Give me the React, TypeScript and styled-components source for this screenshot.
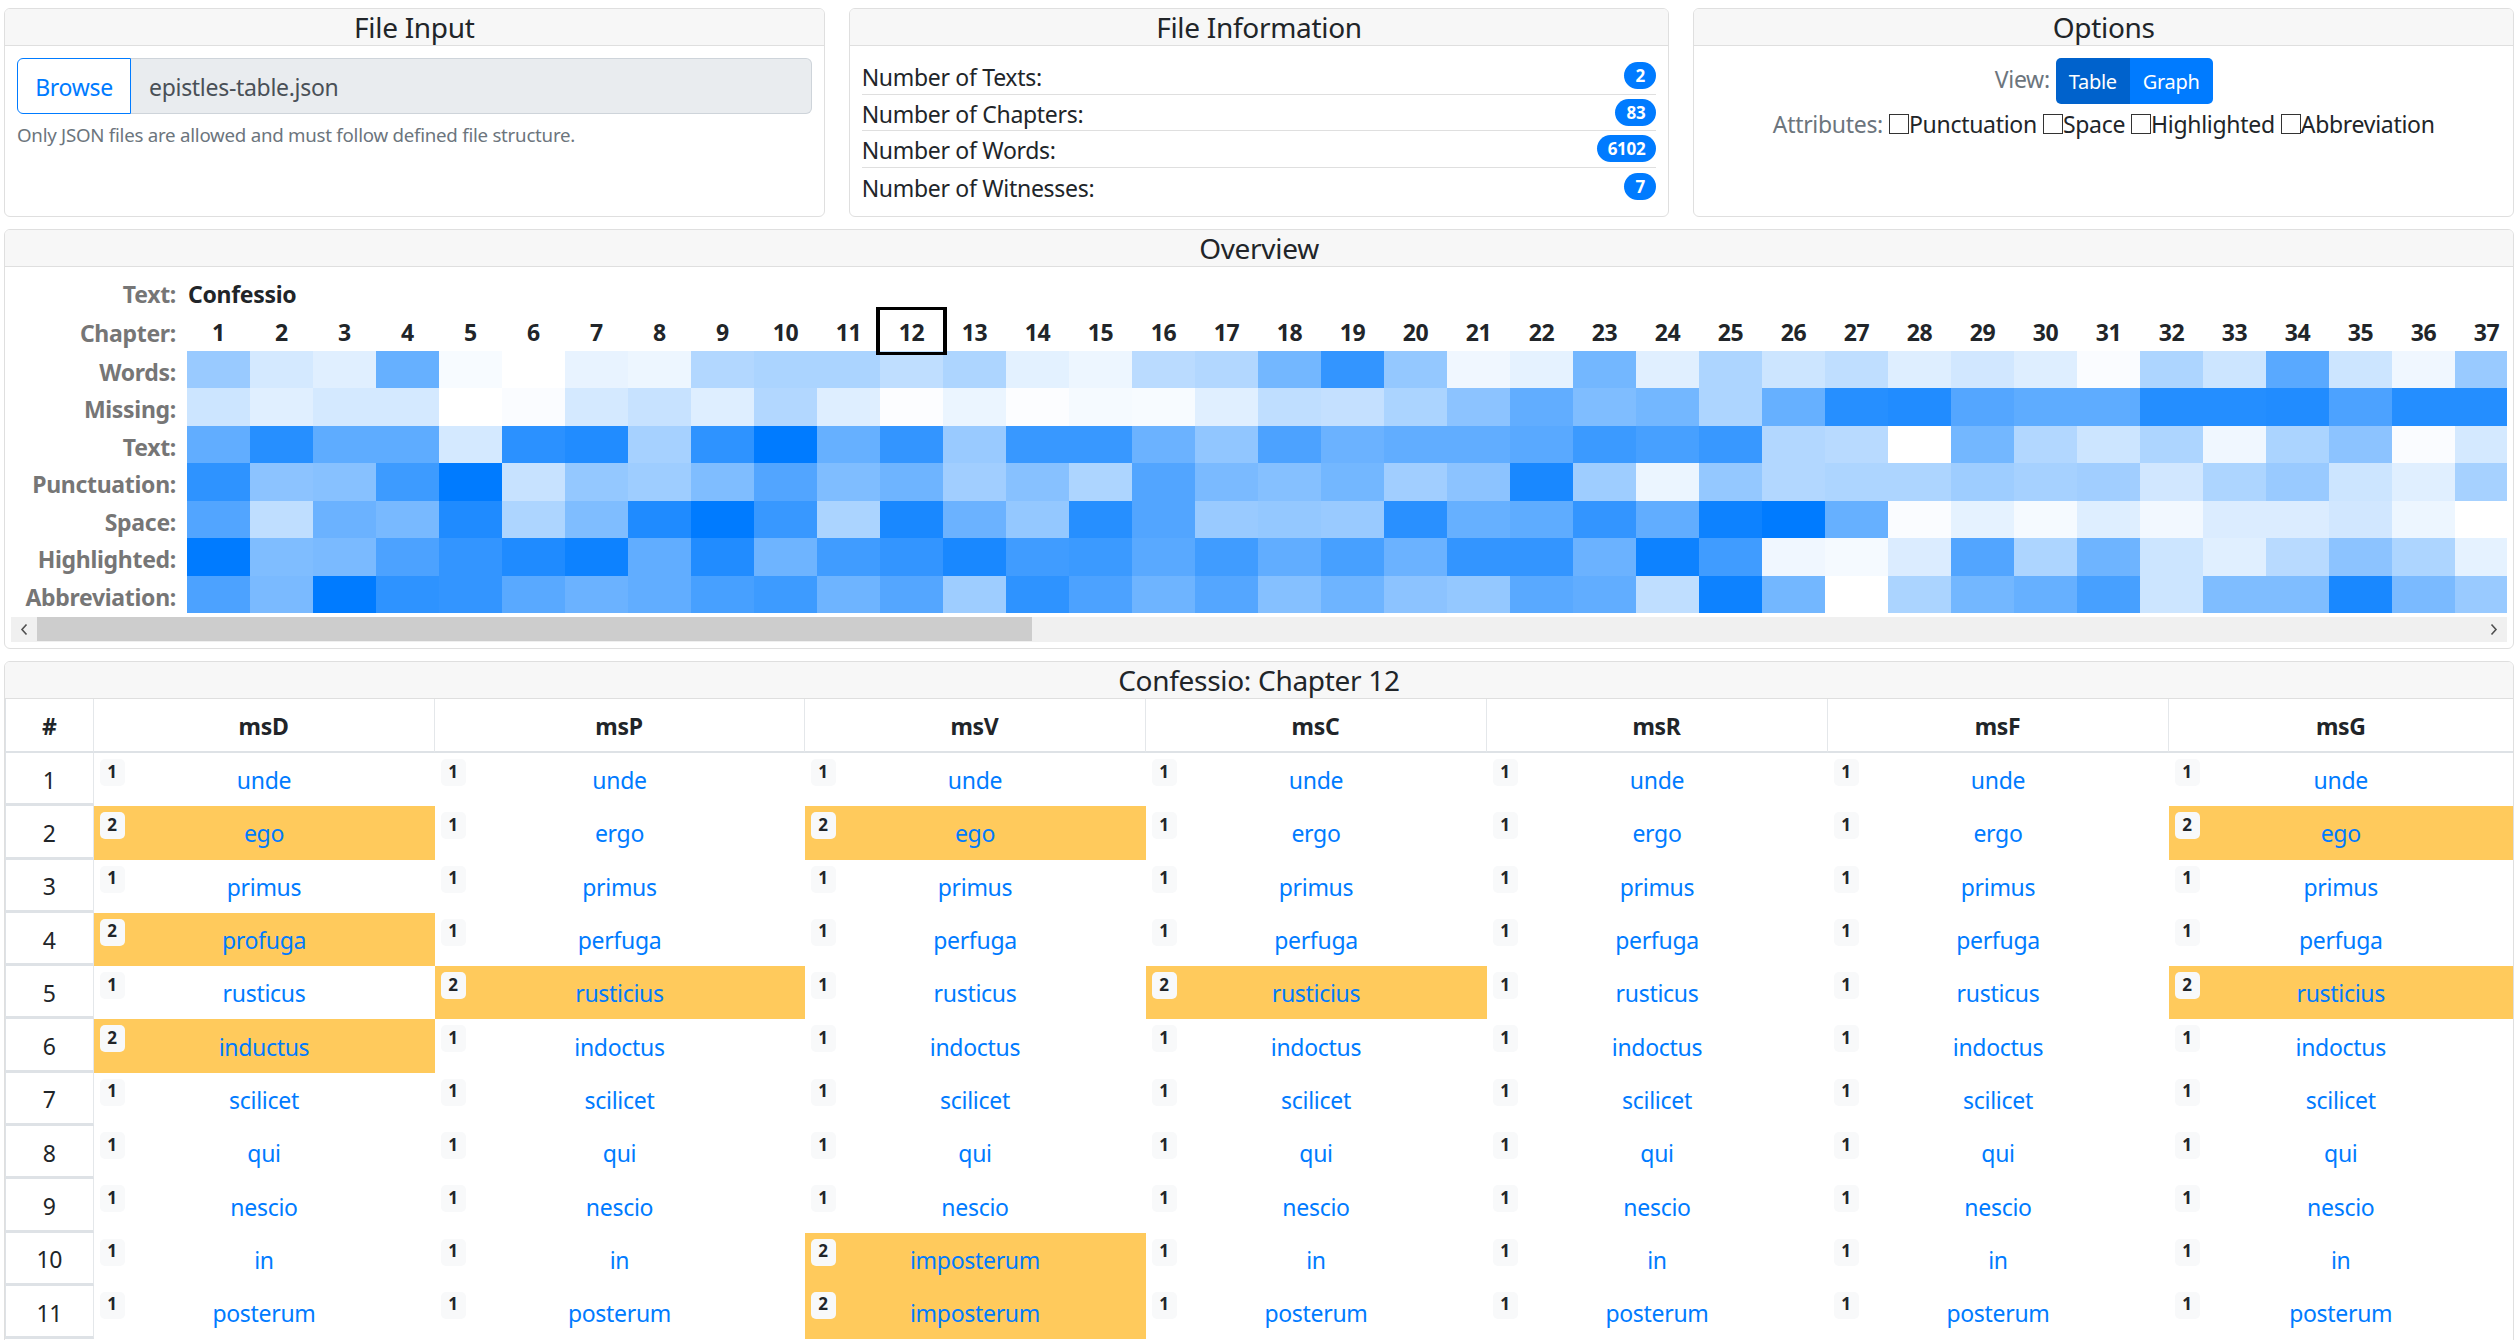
import { createGlobalStyle, styled } from "styled-components";

const FONT = `"Noto Sans", "Open Sans", "Liberation Sans", sans-serif`;

const GlobalStyle = createGlobalStyle`
  html, body {
    margin: 0;
    height: 1340px;
    overflow: hidden;
    background: #fff;
    color: #212529;
    font-family: ${FONT};
    font-size: 23px;
    letter-spacing: -0.3px;
  }
  * { box-sizing: border-box; }
`;

const HEAT: [string, number[]][] = [
  ["Words:", [.4,.17,.12,.6,.03,0,.09,.07,.3,.33,.33,.25,.32,.11,.07,.27,.3,.55,.8,.42,.06,.1,.55,.12,.32,.2,.25,.13,.18,.13,.02,.32,.2,.65,.2,.06,.4]],
  ["Missing:", [.2,.12,.17,.17,0,.02,.17,.22,.13,.3,.13,.01,.08,.01,.04,.03,.12,.25,.23,.33,.45,.62,.5,.55,.32,.6,.85,.87,.67,.63,.63,.86,.86,.87,.7,.86,.86]],
  ["Text:", [.62,.85,.63,.63,.17,.83,.87,.35,.82,1,.6,.8,.4,.78,.78,.58,.43,.7,.58,.62,.62,.65,.77,.72,.78,.3,.28,0,.55,.3,.2,.32,.06,.33,.45,.02,.17]],
  ["Punctuation:", [.82,.45,.47,.76,1,.22,.42,.38,.5,.68,.5,.57,.37,.47,.32,.68,.52,.48,.55,.37,.45,.9,.38,.08,.42,.3,.32,.32,.38,.35,.37,.18,.32,.4,.2,.12,.35]],
  ["Space:", [.68,.25,.58,.53,.88,.32,.5,.88,1,.78,.33,.9,.58,.42,.85,.68,.4,.42,.4,.84,.6,.63,.8,.62,.95,1,.6,.02,.1,.04,.13,.05,.14,.14,.18,.07,0]],
  ["Highlighted:", [1,.5,.52,.7,.8,.88,.95,.62,.87,.57,.75,.8,.9,.75,.77,.65,.75,.62,.72,.58,.8,.8,.58,.95,.75,.06,.04,.14,.68,.32,.57,.2,.12,.28,.45,.32,.1]],
  ["Abbreviation:", [.7,.52,1,.82,.8,.65,.58,.62,.72,.76,.57,.67,.38,.82,.7,.57,.67,.48,.57,.45,.42,.65,.62,.25,.95,.55,0,.33,.55,.6,.72,.2,.5,.5,.9,.52,.4]],
];

const CHAPTERS = Array.from({ length: 37 }, (_, i) => i + 1);
const WITNESSES = ["msD", "msP", "msV", "msC", "msR", "msF", "msG"];
const COL_WIDTHS = [88.5, 341, 370, 341, 341, 341, 341];

const ROWS: string[][] = [
  ["unde", "unde", "unde", "unde", "unde", "unde", "unde"],
  ["*ego", "ergo", "*ego", "ergo", "ergo", "ergo", "*ego"],
  ["primus", "primus", "primus", "primus", "primus", "primus", "primus"],
  ["*profuga", "perfuga", "perfuga", "perfuga", "perfuga", "perfuga", "perfuga"],
  ["rusticus", "*rusticius", "rusticus", "*rusticius", "rusticus", "rusticus", "*rusticius"],
  ["*inductus", "indoctus", "indoctus", "indoctus", "indoctus", "indoctus", "indoctus"],
  ["scilicet", "scilicet", "scilicet", "scilicet", "scilicet", "scilicet", "scilicet"],
  ["qui", "qui", "qui", "qui", "qui", "qui", "qui"],
  ["nescio", "nescio", "nescio", "nescio", "nescio", "nescio", "nescio"],
  ["in", "in", "*imposterum", "in", "in", "in", "in"],
  ["posterum", "posterum", "*imposterum", "posterum", "posterum", "posterum", "posterum"],
];

const INFO = [
  ["Number of Texts:", "2"],
  ["Number of Chapters:", "83"],
  ["Number of Words:", "6102"],
  ["Number of Witnesses:", "7"],
];

const Page = styled.div`
  height: 1340px;
  overflow: hidden;
  padding: 8px 5px 0 4px;
  display: flex;
  flex-direction: column;
  gap: 12px;
`;

const TopRow = styled.div`
  display: grid;
  grid-template-columns: repeat(3, 1fr);
  gap: 24px;
`;

const Card = styled.section<{ $height?: number }>`
  border: 1px solid #dfdfdf;
  border-radius: 6px;
  overflow: hidden;
  flex-shrink: 0;
  ${(p) => (p.$height ? `height: ${p.$height}px;` : "")}
`;

const CardHeader = styled.header`
  height: 37px;
  line-height: 36px;
  background: #f7f7f7;
  border-bottom: 1px solid #dfdfdf;
  text-align: center;
  font-size: 28px;
`;

const InputBody = styled.div`
  padding: 12px 12px 0;
`;

const InputGroup = styled.div`
  display: flex;
  height: 56px;
`;

const BrowseButton = styled.button`
  width: 114px;
  padding: 2px 0 0;
  border: 1px solid #007bff;
  border-radius: 6px 0 0 6px;
  background: #fff;
  color: #007bff;
  font: inherit;
  letter-spacing: inherit;
`;

const FileName = styled.div`
  flex: 1;
  display: flex;
  align-items: center;
  padding: 2px 0 0 18px;
  background: #e9ecef;
  border: 1px solid #ced4da;
  border-left: none;
  border-radius: 0 6px 6px 0;
  color: #495057;
`;

const HelpText = styled.p`
  margin: 8px 0 0;
  font-size: 18.7px;
  letter-spacing: -0.25px;
  color: #6c757d;
`;

const InfoList = styled.ul`
  list-style: none;
  margin: 0;
  padding: 12px 12px 0;
`;

const InfoRow = styled.li`
  height: 36.6px;
  display: flex;
  justify-content: space-between;
  align-items: center;
  border-bottom: 1px solid #dfdfdf;
  &:last-child {
    border-bottom: none;
  }
`;

const InfoLabel = styled.span`
  padding-top: 3px;
`;

const CountBadge = styled.span`
  min-width: 32px;
  height: 27px;
  padding: 0 11px;
  display: inline-flex;
  align-items: center;
  justify-content: center;
  border-radius: 14px;
  background: #007bff;
  color: #fff;
  font-size: 17px;
  font-weight: 700;
`;

const OptionsBody = styled.div`
  padding-top: 12px;
  display: flex;
  flex-direction: column;
  align-items: center;
`;

const OptionLine = styled.div`
  display: flex;
  align-items: center;
  gap: 6px;
  height: 40px;
`;

const ViewLine = styled(OptionLine)`
  align-items: flex-start;
  height: 46px;
`;

const OptionLabel = styled.span`
  color: #6c757d;
`;

const ViewLabel = styled(OptionLabel)`
  line-height: 42px;
`;

const ButtonGroup = styled.div`
  display: flex;
  height: 46px;
  border-radius: 5px;
  overflow: hidden;
`;

const ViewButton = styled.button<{ $active?: boolean }>`
  border: none;
  padding: 0 13px;
  background: ${(p) => (p.$active ? "#0062cc" : "#007bff")};
  color: #fff;
  font: inherit;
  font-size: 20px;
  letter-spacing: inherit;
`;

const CheckLabel = styled.label`
  display: inline-flex;
  align-items: center;
`;

const CheckBox = styled.input`
  appearance: none;
  width: 20px;
  height: 20px;
  margin: 0;
  border: 1px solid #333;
  background: #fff;
`;

const OverviewBody = styled.div`
  padding: 8.5px 6px 6px;
`;

const HeatArea = styled.div`
  overflow: hidden;
`;

const HeatRow = styled.div`
  display: grid;
  grid-template-columns: 176px repeat(37, 63px);
  height: 37.5px;
  align-items: center;
`;

const RowLabel = styled.div`
  text-align: right;
  padding: 2px 11px 0 0;
  color: #767676;
  font-weight: 700;
  white-space: nowrap;
`;

const TextLabel = styled(RowLabel)`
  padding-top: 0;
`;

const HeatLabel = styled(RowLabel)`
  padding-top: 5px;
`;

const TextValue = styled.div`
  grid-column: 2 / span 6;
  padding-left: 1px;
  font-weight: 700;
`;

const ChapterCell = styled.div<{ $selected?: boolean }>`
  position: relative;
  height: 100%;
  display: flex;
  align-items: center;
  justify-content: center;
  padding-top: 1px;
  font-weight: 700;
  ${(p) =>
    p.$selected
      ? `&::after {
          content: "";
          position: absolute;
          inset: -6px -4px -4px;
          border-style: solid;
          border-color: #000;
          border-width: 3px 4px;
          z-index: 2;
        }`
      : ""}
`;

const HeatCell = styled.div`
  height: 100%;
  background: #007bff;
`;

const ScrollTrack = styled.div`
  margin-top: 4px;
  height: 25px;
  display: flex;
  background: #f0f0f0;
`;

const ScrollButton = styled.div`
  width: 26px;
  flex-shrink: 0;
  display: flex;
  align-items: center;
  justify-content: center;
  color: #505050;
`;

const ScrollThumb = styled.div`
  width: 995px;
  height: 24px;
  background: #cdcdcd;
`;

const ScrollSpacer = styled.div`
  flex: 1;
`;

const ReadingCard = styled(Card)`
  padding-bottom: 30px;
`;

const Table = styled.table`
  width: 100%;
  table-layout: fixed;
  border-collapse: separate;
  border-spacing: 0;
`;

const HeadCell = styled.th`
  height: 54px;
  padding: 2px 0 0;
  font-weight: 700;
  text-align: center;
  border-right: 1px solid #e4e7ea;
  border-bottom: 2px solid #dee2e6;
  &:first-child {
    border-left: 1px solid #dee2e6;
  }
  &:last-child {
    border-right: none;
  }
`;

const IndexCell = styled.td`
  height: 53.3px;
  padding: 3px 0 0;
  text-align: center;
  border-left: 1px solid #dee2e6;
  border-right: 1px solid #e4e7ea;
  border-bottom: 3px solid #dee2e6;
`;

const WordCell = styled.td<{ $marked?: boolean }>`
  position: relative;
  height: 53.3px;
  padding: 1px 0 0;
  text-align: center;
  background: ${(p) => (p.$marked ? "#ffca5c" : "#fff")};
`;

const WordLink = styled.a`
  color: #007bff;
  text-decoration: none;
`;

const CountTag = styled.span`
  position: absolute;
  top: 6px;
  left: 6px;
  width: 25px;
  height: 27px;
  display: flex;
  align-items: center;
  justify-content: center;
  padding-bottom: 3px;
  border-radius: 5px;
  background: #f8f9fa;
  color: #212529;
  font-size: 17px;
  font-weight: 700;
`;

const Chevron = ({ flip }: { flip?: boolean }) => (
  <svg width="8" height="13" viewBox="0 0 8 13" fill="none">
    <path
      d={flip ? "M1.5 1.5L6 6.5L1.5 11.5" : "M6.5 1.5L2 6.5L6.5 11.5"}
      stroke="currentColor"
      strokeWidth="1.6"
    />
  </svg>
);

export default function App() {
  return (
    <Page>
      <GlobalStyle />
      <TopRow>
        <Card $height={209}>
          <CardHeader>File Input</CardHeader>
          <InputBody>
            <InputGroup>
              <BrowseButton>Browse</BrowseButton>
              <FileName>epistles-table.json</FileName>
            </InputGroup>
            <HelpText>Only JSON files are allowed and must follow defined file structure.</HelpText>
          </InputBody>
        </Card>
        <Card $height={209}>
          <CardHeader>File Information</CardHeader>
          <InfoList>
            {INFO.map(([label, value]) => (
              <InfoRow key={label}>
                <InfoLabel>{label}</InfoLabel>
                <CountBadge>{value}</CountBadge>
              </InfoRow>
            ))}
          </InfoList>
        </Card>
        <Card $height={209}>
          <CardHeader>Options</CardHeader>
          <OptionsBody>
            <ViewLine>
              <ViewLabel>View:</ViewLabel>
              <ButtonGroup>
                <ViewButton $active>Table</ViewButton>
                <ViewButton>Graph</ViewButton>
              </ButtonGroup>
            </ViewLine>
            <OptionLine>
              <OptionLabel>Attributes:</OptionLabel>
              {["Punctuation", "Space", "Highlighted", "Abbreviation"].map((name) => (
                <CheckLabel key={name}>
                  <CheckBox type="checkbox" />
                  {name}
                </CheckLabel>
              ))}
            </OptionLine>
          </OptionsBody>
        </Card>
      </TopRow>

      <Card>
        <CardHeader>Overview</CardHeader>
        <OverviewBody>
          <HeatArea>
            <HeatRow>
              <TextLabel>Text:</TextLabel>
              <TextValue>Confessio</TextValue>
            </HeatRow>
            <HeatRow>
              <RowLabel>Chapter:</RowLabel>
              {CHAPTERS.map((n) => (
                <ChapterCell key={n} $selected={n === 12}>
                  {n}
                </ChapterCell>
              ))}
            </HeatRow>
            {HEAT.map(([label, values]) => (
              <HeatRow key={label}>
                <HeatLabel>{label}</HeatLabel>
                {values.map((v, i) => (
                  <HeatCell key={i} style={{ opacity: v }} />
                ))}
              </HeatRow>
            ))}
          </HeatArea>
          <ScrollTrack>
            <ScrollButton>
              <Chevron />
            </ScrollButton>
            <ScrollThumb />
            <ScrollSpacer />
            <ScrollButton>
              <Chevron flip />
            </ScrollButton>
          </ScrollTrack>
        </OverviewBody>
      </Card>

      <ReadingCard>
        <CardHeader>Confessio: Chapter 12</CardHeader>
        <Table>
          <colgroup>
            {COL_WIDTHS.map((w, i) => (
              <col key={i} style={{ width: w }} />
            ))}
            <col />
          </colgroup>
          <thead>
            <tr>
              <HeadCell>#</HeadCell>
              {WITNESSES.map((w) => (
                <HeadCell key={w}>{w}</HeadCell>
              ))}
            </tr>
          </thead>
          <tbody>
            {ROWS.map((row, r) => (
              <tr key={r}>
                <IndexCell>{r + 1}</IndexCell>
                {row.map((word, c) => {
                  const marked = word.startsWith("*");
                  return (
                    <WordCell key={c} $marked={marked}>
                      <CountTag>{marked ? 2 : 1}</CountTag>
                      <WordLink href="#">{word.replace("*", "")}</WordLink>
                    </WordCell>
                  );
                })}
              </tr>
            ))}
          </tbody>
        </Table>
      </ReadingCard>
    </Page>
  );
}
